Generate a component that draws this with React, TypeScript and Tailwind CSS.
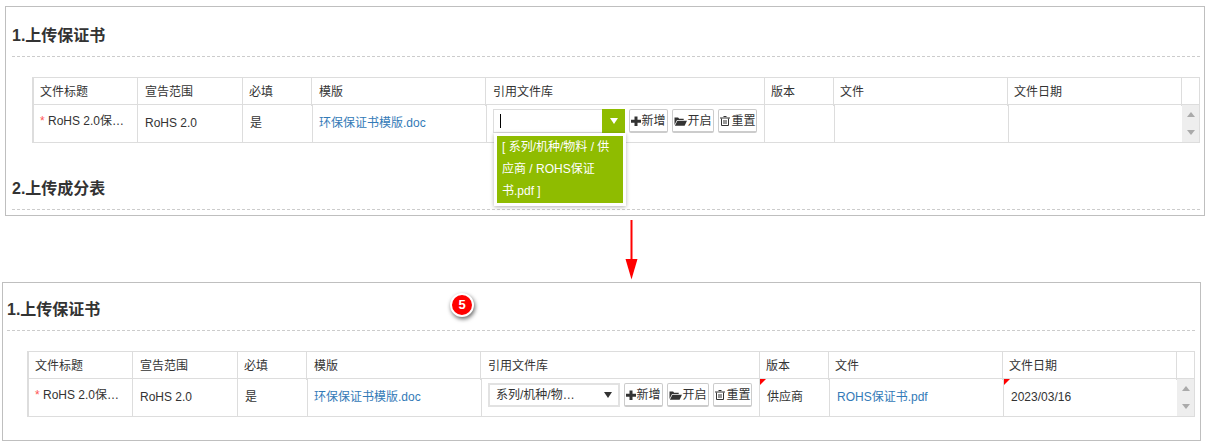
const font = "[font-family:'Liberation_Sans','Noto_Sans_CJK_SC',sans-serif]";

function PlusIcon() {
  return (
    <svg width="10" height="12" viewBox="0 0 10 12" className="shrink-0">
      <path d="M3.5 1.5h3v3.2H10v3H6.5v3.2h-3V7.7H0v-3h3.5z" fill="#333" />
    </svg>
  );
}

function FolderIcon() {
  return (
    <svg width="13" height="12" viewBox="0 0 13 12" className="shrink-0">
      <path d="M0.5 10V2.5h3.6l1 1.2h4.6v1.4H3L0.5 10z" fill="#333" />
      <path d="M3.4 5.8H13l-2.4 4.9H0.9z" fill="#333" />
    </svg>
  );
}

function TrashIcon() {
  return (
    <svg width="12" height="12" viewBox="0 0 12 12" className="shrink-0">
      <path d="M4.5 1.5h3M1 3h10" stroke="#333" strokeWidth="1.2" fill="none" />
      <path d="M2.5 3.5v7h7v-7M5 5v4M7 5v4" stroke="#333" strokeWidth="1" fill="none" />
    </svg>
  );
}

function ToolButton({ icon, label, width }: { icon: React.ReactNode; label: string; width: string }) {
  return (
    <button
      className={`flex h-6 items-center justify-center rounded-[2px] border border-b-2 border-[#ccc] bg-white text-xs text-[#333] ${width}`}
    >
      {icon}
      <span>{label}</span>
    </button>
  );
}

function Buttons() {
  return (
    <div className="flex gap-1">
      <ToolButton icon={<PlusIcon />} label="新增" width="w-[39px]" />
      <ToolButton icon={<FolderIcon />} label="开启" width="w-[42px]" />
      <ToolButton icon={<TrashIcon />} label="重置" width="w-[39px]" />
    </div>
  );
}

function Flag() {
  return (
    <span className="absolute left-0 top-0 h-0 w-0 border-r-[6px] border-t-[6px] border-r-transparent border-t-[#f00]" />
  );
}

function Heading({ children }: { children: React.ReactNode }) {
  return (
    <h2 className="border-b border-dashed border-[#ccc] pb-[9px] pt-px text-base leading-[22px] font-bold text-[#333]">
      {children}
    </h2>
  );
}

function Table({ filled }: { filled: boolean }) {
  const head = "border-r border-[#ddd] pl-[6px] text-xs leading-[28px] text-[#333]";
  const headWide = "border-r border-[#ddd] pl-[7px] text-xs leading-[28px] text-[#333]";
  const cell = "relative border-r border-[#ddd] pl-[7px] pt-2 text-xs leading-5 text-[#333]";
  return (
    <div className="ml-5 w-[1168px] border-y border-r border-l-2 border-[#ddd]">
      <div className="grid h-[27px] grid-cols-[104px_105px_69px_174px_279px_69px_174px_174px_17px] border-b border-[#ddd]">
        <div className={head}>文件标题</div>
        <div className={headWide}>宣告范围</div>
        <div className={head}>必填</div>
        <div className={headWide}>模版</div>
        <div className={headWide}>引用文件库</div>
        <div className={head}>版本</div>
        <div className={head}>文件</div>
        <div className={head}>文件日期</div>
        <div />
      </div>
      <div className="grid h-[37px] grid-cols-[104px_105px_70px_174px_278px_70px_174px_173px_17px]">
        <div className="border-r border-[#ddd] pl-[6px] pt-[6px] text-xs leading-5 text-[#333]">
          <span className="text-[#f55]">*</span> RoHS 2.0保…
        </div>
        <div className={cell}>RoHS 2.0</div>
        <div className={cell}>是</div>
        <div className="relative border-r border-[#ddd] pl-[6px] pt-2 text-xs leading-5 text-[#333]">
          <a className="text-[#337ab7]">环保保证书模版.doc</a>
        </div>
        <div className="relative flex gap-1 border-r border-[#ddd] pl-[6px] pt-1">
          {filled ? (
            <div className="flex h-6 w-[132px] items-center justify-between border-2 border-[#e2e2e2] pl-[6px] pr-[6px] text-xs text-[#333]">
              <span>系列/机种/物…</span>
              <span className="h-0 w-0 border-x-[4px] border-t-[6px] border-x-transparent border-t-[#333]" />
            </div>
          ) : (
            <div className="relative z-10 flex h-6 w-[132px] items-stretch justify-between border border-[#ddd] bg-white">
              <span className="ml-[6px] mt-1 h-[14px] w-px bg-black" />
              <span className="-my-px -mr-px flex w-[23px] items-center justify-center bg-[#8fbc00]">
                <span className="h-0 w-0 border-x-[4px] border-t-[6px] border-x-transparent border-t-white" />
              </span>
              <div className="absolute left-0 top-[23px] w-[132px] bg-white p-[3px] shadow-[0_1px_4px_rgba(0,0,0,0.3)]">
                <div className="bg-[#8fbc00] px-[5px] pb-px text-xs leading-[22px] text-white">
                  [ 系列/机种/物料 / 供应商 / ROHS保证书.pdf ]
                </div>
              </div>
            </div>
          )}
          <Buttons />
        </div>
        <div className={cell}>
          {filled && (
            <>
              <Flag />
              供应商
            </>
          )}
        </div>
        <div className={cell}>
          {filled && <a className="text-[#337ab7]">ROHS保证书.pdf</a>}
        </div>
        <div className="relative pl-[7px] pt-2 text-xs leading-5 text-[#333]">
          {filled && (
            <>
              <Flag />
              2023/03/16
            </>
          )}
        </div>
        <div className="flex flex-col items-center gap-[13px] bg-[#eee] pt-[7px]">
          <span className="h-0 w-0 border-x-[4px] border-b-[5px] border-x-transparent border-b-[#aaa]" />
          <span className="h-0 w-0 border-x-[4px] border-t-[5px] border-x-transparent border-t-[#aaa]" />
        </div>
      </div>
    </div>
  );
}

export default function App() {
  return (
    <div className={`h-[447px] w-[1210px] overflow-hidden bg-white ${font}`}>
      <section className="ml-[5px] mt-[6px] h-[210px] w-[1200px] border border-[#bfbfbf] pl-[6px] pr-[4px] pt-[17px]">
        <Heading>1.上传保证书</Heading>
        <div className="mt-5">
          <Table filled={false} />
        </div>
        <div className="mt-[17px] pt-[17px]">
          <Heading>2.上传成分表</Heading>
        </div>
      </section>

      <div className="flex h-[66px] pl-[625px] pt-1">
        <svg width="13" height="60" viewBox="0 0 13 60">
          <path d="M5.5 0h2v40h-2z" fill="#f00" />
          <path d="M0.5 39h12L6.5 59.5z" fill="#f00" />
        </svg>
      </div>

      <section className="relative ml-[2px] h-[159px] w-[1199px] border border-[#bfbfbf] pl-[4px] pr-[5px] pt-[15px]">
        <Heading>1.上传保证书</Heading>
        <div className="mt-5">
          <Table filled={true} />
        </div>
        <span className="absolute left-[447px] top-[10px] flex h-6 w-6 items-center justify-center rounded-full border-2 border-white bg-[#f00] text-[13px] font-bold text-white shadow-[1px_2px_4px_rgba(0,0,0,0.6)]">
          5
        </span>
      </section>
    </div>
  );
}
